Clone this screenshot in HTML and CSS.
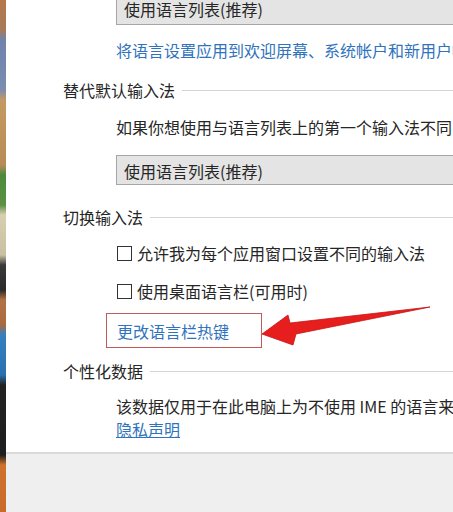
FILE: index.html
```html
<!DOCTYPE html>
<html lang="zh-CN">
<head>
    <meta charset="UTF-8">
    <meta name="viewport" content="width=device-width, initial-scale=1.0">
    <title>高级键盘设置</title>
    <link rel="stylesheet" href="styles.css">
</head>
<body>
    <div class="wallpaper"></div>
    <div class="window">
        <div class="content">
            <div class="select first">使用语言列表(推荐)</div>
            <div class="row link indent">将语言设置应用到欢迎屏幕、系统帐户和新用户帐户</div>

            <div class="section s1">替代默认输入法</div>
            <div class="row indent p1">如果你想使用与语言列表上的第一个输入法不同的输入法，请在此处选择</div>
            <div class="select second">使用语言列表(推荐)</div>

            <div class="section s2">切换输入法</div>
            <label class="row indent check c1"><span class="box"></span>允许我为每个应用窗口设置不同的输入法</label>
            <label class="row indent check c2"><span class="box"></span>使用桌面语言栏(可用时)</label>
            <div class="hotkey">
                <span class="link">更改语言栏热键</span>
                <svg class="arrow" width="180" height="44" viewBox="0 0 180 44">
                    <polygon points="0,28 26,9 28,17 168,1 34,28 31,39" fill="#e61e1e" stroke="#c81414" stroke-width="0.8" stroke-linejoin="round"/>
                </svg>
            </div>

            <div class="section s3">个性化数据</div>
            <div class="row indent p2">该数据仅用于在此电脑上为不使用 IME 的语言来改进手写识别和文本预测结果。不会向 Microsoft 发送任何信息。</div>
            <div class="row indent privacy"><a href="#">隐私声明</a></div>
        </div>
        <div class="footer"></div>
    </div>
</body>
</html>
```

FILE: styles.css
```css
html, body {
    margin: 0;
    height: 100%;
}
body {
    display: flex;
    overflow: hidden;
    font-family: "Noto Sans CJK SC", "Noto Sans", sans-serif;
    font-size: 16px;
    color: #262626;
    background: #fff;
}
.wallpaper {
    width: 6px;
    flex: none;
    background: linear-gradient(to bottom,
        #b4784c 0, #a87a5a 30px, #6f84ad 40px, #7a8cb0 90px,
        #c49a62 100px, #b88a58 165px, #4d8a3e 175px, #5c8f45 205px,
        #d8cfb0 215px, #c8c0a0 255px, #3a3a3a 265px, #2a2a2a 290px,
        #b27244 300px, #a86a40 325px, #3580c2 335px, #2a70b0 375px,
        #222 385px, #1e1e1e 455px, #d0722e 465px, #c86a2a 512px);
}
.window {
    flex: 1;
    display: flex;
    flex-direction: column;
    min-width: 0;
}
.content {
    padding-left: 57px;
    overflow: hidden;
    white-space: nowrap;
}
.row {
    line-height: 24px;
    height: 24px;
}
.indent {
    margin-left: 53px;
}
.link {
    color: #2f73bd;
}
.select {
    margin-left: 53px;
    margin-right: -20px;
    height: 29px;
    line-height: 29px;
    padding-left: 7px;
    background: #e4e4e4;
    border: 1px solid #a6a6a6;
}
.select.first {
    margin-top: -6px;
}
.select.second {
    margin-top: 16px;
    height: 28px;
    line-height: 31px;
}
.first + .link {
    margin-top: 13px;
}
.section {
    display: flex;
    align-items: center;
    line-height: 24px;
    height: 24px;
}
.section::after {
    content: "";
    flex: 1;
    margin-left: 7px;
    border-top: 1px solid #d4d4d4;
}
.s1 {
    margin-top: 16px;
}
.p1 {
    margin-top: 13px;
}
.s2 {
    margin-top: 20px;
}
.check {
    display: flex;
    align-items: center;
}
.c1 {
    margin-top: 12px;
}
.c2 {
    margin-top: 14px;
}
.box {
    width: 13px;
    height: 13px;
    margin: 0 5px 0 1px;
    border: 1px solid #333;
    background: #fff;
}
.hotkey {
    position: relative;
    margin: 10px 0 0 43px;
    width: 144px;
    height: 33px;
    line-height: 34px;
    padding-left: 10px;
    border: 1px solid #c25a5a;
}
.arrow {
    position: absolute;
    left: 155px;
    top: -8px;
}
.s3 {
    margin-top: 11px;
}
.p2 {
    margin-top: 11px;
}
.privacy {
    height: 22px;
    line-height: 22px;
}
.privacy a {
    color: #2f73bd;
}
.footer {
    flex: 1;
    margin-top: 12px;
    background: #efefef;
    border-top: 2px solid #d9d9d9;
}
```
